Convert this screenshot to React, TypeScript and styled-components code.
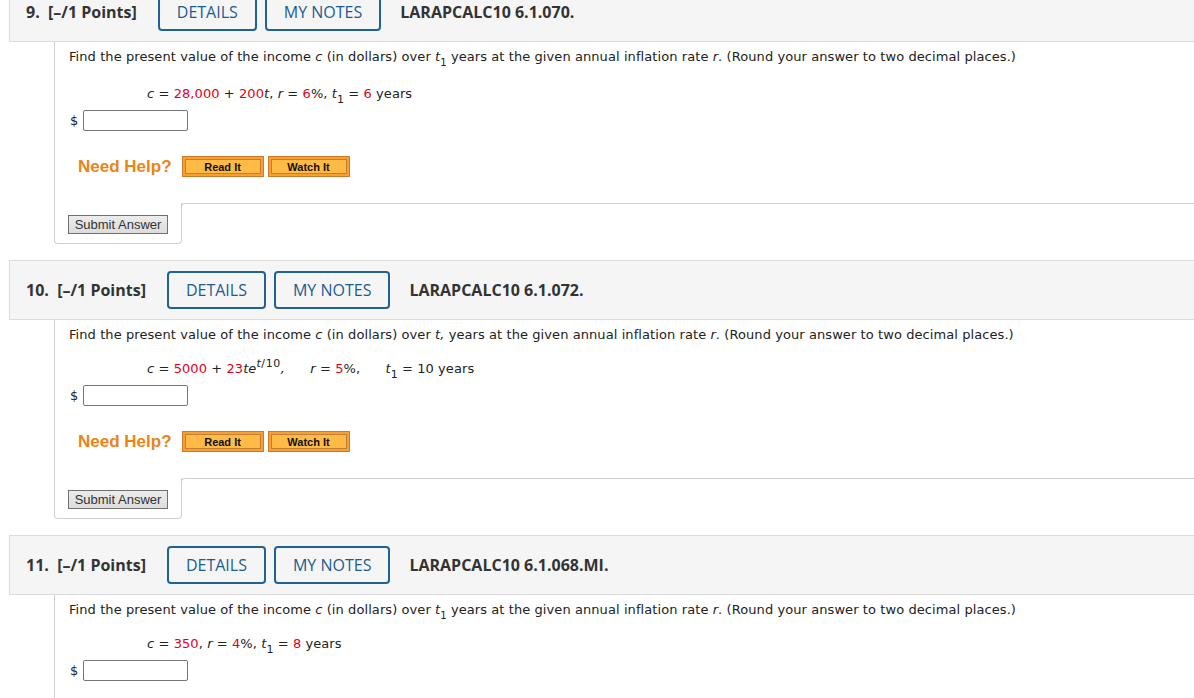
import React from "react";
import styled, { createGlobalStyle } from "styled-components";

const GlobalStyle = createGlobalStyle`
  html, body { margin: 0; padding: 0; background: #fff; }
  body { overflow: hidden; font-family: "DejaVu Sans", Verdana, sans-serif; }
`;

const Page = styled.div`
  margin-top: -18px;
  padding-left: 9px;
  margin-right: -30px;
`;

const Question = styled.section`
  margin-bottom: 16px;
`;

const Header = styled.header`
  display: flex;
  align-items: center;
  height: 38px;
  padding: 10px 0 10px 16px;
  background: #f5f5f5;
  border: 1px solid #dcdcdc;
  border-right: none;
  font-family: "Open Sans", "Noto Sans", sans-serif;
  color: #333;
`;

const Label = styled.span`
  font-size: 16px;
  font-weight: 700;
  margin-right: 21px;
  white-space: pre;
`;

const HeadButton = styled.button`
  height: 38px;
  padding: 0 17px;
  margin-right: 8px;
  background: #f5f5f5;
  border: 2px solid #1f6298;
  border-radius: 4px;
  font-family: "Open Sans", "Noto Sans", sans-serif;
  font-size: 16px;
  color: #1d5c8f;
`;

const Code = styled.span`
  font-size: 16px;
  font-weight: 700;
  margin-left: 11px;
`;

const Body = styled.div`
  margin-left: 45px;
  border-left: 1px solid #cfcfcf;
  padding: 7px 0 26px 14px;
  font-size: 13px;
  letter-spacing: 0.08px;
  color: #222;
`;

const Prompt = styled.p`
  margin: 0;
  line-height: 16px;
  sub { font-size: 10px; vertical-align: -5px; line-height: 0; }
`;

const Formula = styled.div<{ $gap: number }>`
  margin: ${(p) => p.$gap}px 0 0 78px;
  line-height: 16px;
  white-space: pre;
  sub { font-size: 11px; vertical-align: -5px; line-height: 0; }
  sup { font-size: 11px; vertical-align: 6px; line-height: 0; letter-spacing: 0.6px; }
`;

const Red = styled.span`
  color: #e0001b;
`;

const AnswerRow = styled.div`
  display: flex;
  align-items: center;
  margin-top: 8px;
  margin-left: 1px;
  gap: 5px;
`;

const Input = styled.div`
  width: 103px;
  height: 19px;
  border: 1px solid #767676;
  border-radius: 2px;
  background: #fff;
`;

const HelpRow = styled.div`
  display: flex;
  align-items: center;
  margin: 25px 0 0 9px;
`;

const HelpText = styled.span`
  font-family: "Liberation Sans", Arial, sans-serif;
  font-weight: 700;
  font-size: 17px;
  letter-spacing: 0;
  color: #ec8414;
  margin-right: 10px;
`;

const HelpButton = styled.span`
  display: flex;
  width: 82px;
  height: 21px;
  box-sizing: border-box;
  padding: 2px;
  margin-right: 4px;
  background: #f7a031;
  border: 1px solid #cf7a2b;
`;

const HelpInner = styled.span`
  flex: 1;
  display: flex;
  align-items: center;
  justify-content: center;
  background: #ffbb45;
  border: 1px solid #c57c34;
  font-family: "Liberation Sans", Arial, sans-serif;
  font-weight: 700;
  font-size: 11px;
  letter-spacing: 0;
  color: #111;
`;

const Footer = styled.div`
  display: flex;
  align-items: flex-start;
  margin-left: 45px;
`;

const SubmitTab = styled.div`
  width: 113px;
  padding: 12px 0 9px 13px;
  border: 1px solid #cfcfcf;
  border-top: none;
  border-radius: 0 0 4px 4px;
`;

const SubmitButton = styled.button`
  display: block;
  width: 100px;
  height: 19px;
  padding: 0;
  background: linear-gradient(#ececec, #dcdcdc);
  border: 1px solid #707070;
  font-family: "Liberation Sans", Arial, sans-serif;
  font-size: 13px;
  color: #333;
`;

const Filler = styled.div`
  flex: 1;
  height: 8px;
  margin-left: -1px;
  border-top: 1px solid #cfcfcf;
  border-left: 1px solid #cfcfcf;
  border-top-left-radius: 4px;
`;

type Q = {
  num: string;
  code: string;
  sub: boolean;
  formula: React.ReactNode;
  gap: number;
  last?: boolean;
};

const questions: Q[] = [
  {
    num: "9.  [–/1 Points]",
    code: "LARAPCALC10 6.1.070.",
    sub: true,
    gap: 21,
    formula: (
      <>
        <i>c</i> = <Red>28,000</Red> + <Red>200</Red><i>t</i>, <i>r</i> = <Red>6</Red>%, <i>t</i>
        <sub>1</sub> = <Red>6</Red> years
      </>
    ),
  },
  {
    num: "10.  [–/1 Points]",
    code: "LARAPCALC10 6.1.072.",
    sub: false,
    gap: 18,
    formula: (
      <>
        <i>c</i> = <Red>5000</Red> + <Red>23</Red><i>te</i>
        <sup>
          <i>t</i>/10
        </sup>
        <i>,</i>{"      "}<i>r</i> = <Red>5</Red>%,{"      "}<i>t</i>
        <sub>1</sub> = 10 years
      </>
    ),
  },
  {
    num: "11.  [–/1 Points]",
    code: "LARAPCALC10 6.1.068.MI.",
    sub: true,
    gap: 18,
    last: true,
    formula: (
      <>
        <i>c</i> = <Red>350</Red>, <i>r</i> = <Red>4</Red>%, <i>t</i>
        <sub>1</sub> = <Red>8</Red> years
      </>
    ),
  },
];

function QuestionBlock({ q }: { q: Q }) {
  return (
    <Question>
      <Header>
        <Label>{q.num}</Label>
        <HeadButton>DETAILS</HeadButton>
        <HeadButton>MY NOTES</HeadButton>
        <Code>{q.code}</Code>
      </Header>
      <Body>
        <Prompt>
          Find the present value of the income <i>c</i> (in dollars) over{" "}
          {q.sub ? (
            <>
              <i>t</i>
              <sub>1</sub>
            </>
          ) : (
            <i>t,</i>
          )}{" "}
          years at the given annual inflation rate <i>r</i>. (Round your answer to two decimal places.)
        </Prompt>
        <Formula $gap={q.gap}>{q.formula}</Formula>
        <AnswerRow>
          <span>$</span>
          <Input />
        </AnswerRow>
        {!q.last && (
          <HelpRow>
            <HelpText>Need Help?</HelpText>
            <HelpButton>
              <HelpInner>Read It</HelpInner>
            </HelpButton>
            <HelpButton>
              <HelpInner>Watch It</HelpInner>
            </HelpButton>
          </HelpRow>
        )}
      </Body>
      {!q.last && (
        <Footer>
          <SubmitTab>
            <SubmitButton>Submit Answer</SubmitButton>
          </SubmitTab>
          <Filler />
        </Footer>
      )}
    </Question>
  );
}

export default function App() {
  return (
    <>
      <GlobalStyle />
      <Page>
        {questions.map((q) => (
          <QuestionBlock key={q.num} q={q} />
        ))}
      </Page>
    </>
  );
}
